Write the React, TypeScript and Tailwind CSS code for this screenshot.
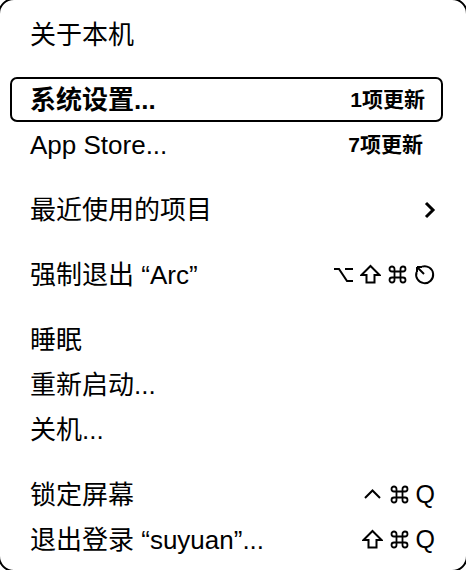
import React from "react";

const font = {
  fontFamily: '"Liberation Sans", "Noto Sans CJK SC", sans-serif',
};

function Sep() {
  return <div className="h-[20px]" />;
}

function Row({
  label,
  right,
  selected,
}: {
  label: string;
  right?: React.ReactNode;
  selected?: boolean;
}) {
  return (
    <div
      className={
        "ml-[10px] mr-[23px] flex h-[45px] items-center justify-between rounded-[7px] pl-[18px] " +
        (selected ? "border-2 border-black font-bold" : "border-2 border-transparent")
      }
    >
      <span className="text-[26px] leading-none text-black">{label}</span>
      {right ? <span className="mr-[6px] flex items-center text-black">{right}</span> : null}
    </div>
  );
}

const S = { width: 21, height: 21, viewBox: "0 0 21 21", fill: "none", stroke: "black", strokeWidth: 2 };

function Opt() {
  return (
    <svg {...S}>
      <path d="M1 5 H6 L14 17 H20 M12 5 H20" strokeLinejoin="miter" />
    </svg>
  );
}
function Shift() {
  return (
    <svg {...S}>
      <path d="M10.5 2 L19.5 11 H14.5 V18.5 H6.5 V11 H1.5 Z" strokeLinejoin="miter" />
    </svg>
  );
}
function Cmd() {
  return (
    <svg {...S} strokeWidth={1.8}>
      <path d="M7.5 7.5 H13.5 V13.5 H7.5 Z M7.5 7.5 V5 A2.5 2.5 0 1 0 5 7.5 H7.5 M13.5 7.5 V5 A2.5 2.5 0 1 1 16 7.5 H13.5 M13.5 13.5 V16 A2.5 2.5 0 1 0 16 13.5 H13.5 M7.5 13.5 V16 A2.5 2.5 0 1 1 5 13.5 H7.5" />
    </svg>
  );
}
function Esc() {
  return (
    <svg {...S}>
      <path d="M8 2.6 A8.5 8.5 0 1 1 2.6 8" />
      <path d="M3 3 L10 10" />
      <path d="M3 3 H8 M3 3 V8" />
    </svg>
  );
}
function Ctrl() {
  return (
    <svg {...S}>
      <path d="M3 14 L10.5 6.5 L18 14" />
    </svg>
  );
}

export default function App() {
  return (
    <div className="h-[570px] w-[466px] overflow-hidden bg-white" style={font}>
      <div className="-ml-[2px] -mt-[2px] h-[574px] w-[470px] rounded-[16px] border-2 border-black pt-[12px]">
        <Row label="关于本机" />
        <Sep />
        <Row
          label="系统设置..."
          selected
          right={<span className="mr-[10px] text-[21px] font-bold leading-none">1项更新</span>}
        />
        <Row
          label="App Store..."
          right={<span className="mr-[12px] text-[21px] font-semibold leading-none">7项更新</span>}
        />
        <Sep />
        <Row
          label="最近使用的项目"
          right={
            <svg width="12" height="20" viewBox="0 0 12 20" className="-mr-[1px]">
              <path d="M2 3 L9 10 L2 17" fill="none" stroke="black" strokeWidth="3" />
            </svg>
          }
        />
        <Sep />
        <Row
          label="强制退出 “Arc”"
          right={
            <span className="flex items-center gap-[6px]">
              <Opt />
              <Shift />
              <Cmd />
              <Esc />
            </span>
          }
        />
        <Sep />
        <Row label="睡眠" />
        <Row label="重新启动..." />
        <Row label="关机..." />
        <Sep />
        <Row
          label="锁定屏幕"
          right={
            <span className="flex items-center gap-[6px]">
              <Ctrl />
              <Cmd />
              <span className="text-[25px] leading-none">Q</span>
            </span>
          }
        />
        <Row
          label="退出登录 “suyuan”..."
          right={
            <span className="flex items-center gap-[6px]">
              <Shift />
              <Cmd />
              <span className="text-[25px] leading-none">Q</span>
            </span>
          }
        />
      </div>
    </div>
  );
}
